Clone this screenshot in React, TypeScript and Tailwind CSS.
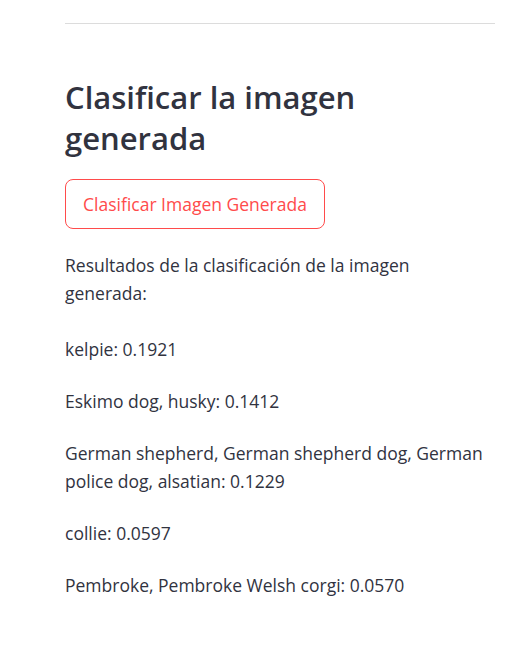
import React from "react";

const results = [
  "kelpie: 0.1921",
  "Eskimo dog, husky: 0.1412",
  "German shepherd, German shepherd dog, German police dog, alsatian: 0.1229",
  "collie: 0.0597",
  "Pembroke, Pembroke Welsh corgi: 0.0570",
];

const App = () => {
  return (
    <div
      className="w-[527px] h-[652px] bg-white text-[#31333f] px-[65px] pt-[23px]"
      style={{ fontFamily: "'Open Sans', 'Liberation Sans', sans-serif" }}
    >
      <hr className="w-[430px] border-0 border-t border-[#dcdcdc]" />

      <h3 className="mt-[53px] text-[31px] leading-[41px] font-semibold w-[330px]">
        Clasificar la imagen generada
      </h3>

      <button className="mt-[20px] h-[50px] w-[260px] rounded-[8px] border border-[#ff4b4b] bg-white text-[17.5px] text-[#ff4b4b]">
        Clasificar Imagen Generada
      </button>

      <div className="mt-[22px] w-[430px] text-[17.5px] leading-[28px]">
        <p className="mb-[28px]">
          Resultados de la clasificación de la imagen generada:
        </p>
        {results.map((item) => (
          <p key={item} className="mb-[24px]">
            {item}
          </p>
        ))}
      </div>
    </div>
  );
};

export default App;
